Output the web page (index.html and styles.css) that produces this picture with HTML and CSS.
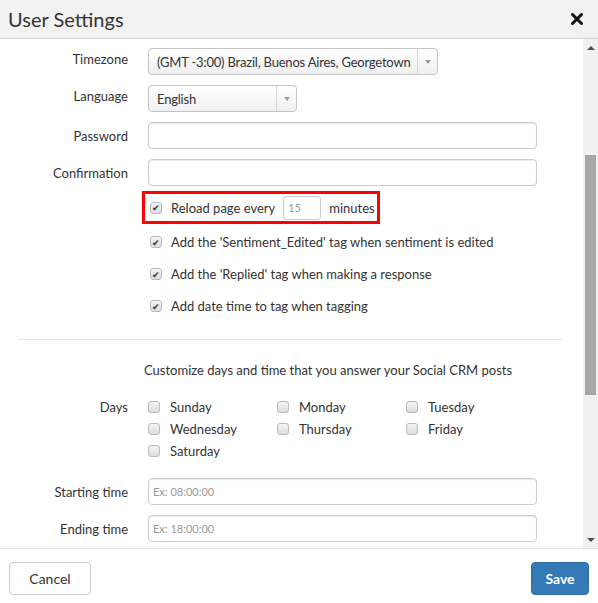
FILE: index.html
```html
<!DOCTYPE html>
<html lang="en">
<head>
<meta charset="UTF-8">
<title>User Settings</title>
<link rel="stylesheet" href="styles.css">
</head>
<body>
<div class="modal">
  <div class="modal-header">
    <h4 class="modal-title">User Settings</h4>
    <span class="close">
      <svg width="12" height="12" viewBox="0 0 12 12"><path d="M1.5 1.5 L10.5 10.5 M10.5 1.5 L1.5 10.5" stroke="#111" stroke-width="3" stroke-linecap="round"/></svg>
    </span>
  </div>

  <div class="modal-main">
    <div class="modal-body">
      <div class="form-row select-row">
        <label class="form-label">Timezone</label>
        <div class="select tz"><span class="select-text">(GMT -3:00) Brazil, Buenos Aires, Georgetown</span><span class="select-arrow"></span></div>
      </div>
      <div class="form-row select-row">
        <label class="form-label">Language</label>
        <div class="select lang"><span class="select-text">English</span><span class="select-arrow"></span></div>
      </div>
      <div class="form-row">
        <label class="form-label">Password</label>
        <div class="input"></div>
      </div>
      <div class="form-row">
        <label class="form-label">Confirmation</label>
        <div class="input"></div>
      </div>

      <div class="check-list">
        <div class="reload-box">
          <span class="checkbox checked"></span>
          <span>Reload page every</span>
          <span class="mini-input">15</span>
          <span>minutes</span>
        </div>
        <div class="check-row"><span class="checkbox checked"></span>Add the 'Sentiment_Edited' tag when sentiment is edited</div>
        <div class="check-row"><span class="checkbox checked"></span>Add the 'Replied' tag when making a response</div>
        <div class="check-row"><span class="checkbox checked"></span>Add date time to tag when tagging</div>
      </div>

      <hr class="divider">

      <p class="hint">Customize days and time that you answer your Social CRM posts</p>

      <div class="form-row days-row">
        <label class="form-label">Days</label>
        <div class="days">
          <div class="day"><span class="checkbox"></span>Sunday</div>
          <div class="day"><span class="checkbox"></span>Monday</div>
          <div class="day"><span class="checkbox"></span>Tuesday</div>
          <div class="day"><span class="checkbox"></span>Wednesday</div>
          <div class="day"><span class="checkbox"></span>Thursday</div>
          <div class="day"><span class="checkbox"></span>Friday</div>
          <div class="day"><span class="checkbox"></span>Saturday</div>
        </div>
      </div>

      <div class="form-row">
        <label class="form-label">Starting time</label>
        <div class="input"><span class="placeholder">Ex: 08:00:00</span></div>
      </div>
      <div class="form-row">
        <label class="form-label">Ending time</label>
        <div class="input"><span class="placeholder">Ex: 18:00:00</span></div>
      </div>
    </div>

    <div class="scrollbar">
      <span class="arrow up"></span>
      <div class="track"><div class="thumb"></div></div>
      <span class="arrow down"></span>
    </div>
  </div>

  <div class="modal-footer">
    <button class="btn">Cancel</button>
    <button class="btn btn-primary">Save</button>
  </div>
</div>
</body>
</html>
```

FILE: styles.css
```css
* { box-sizing: border-box; }
body { margin: 0; background: #fff; color: #333; font-family: Lato, "Open Sans", sans-serif; font-size: 13px; }
.modal { width: 598px; height: 603px; display: flex; flex-direction: column; }

.modal-header { height: 39px; background: #f2f2f2; border-bottom: 1px solid #d4d4d4; display: flex; align-items: center; justify-content: space-between; padding: 0 15px 0 8px; }
.modal-title { margin: 0; font-size: 20px; font-weight: normal; color: #333; }
.close { display: flex; }

.modal-main { height: 509px; display: flex; overflow: hidden; }
.modal-body { flex: 1; padding: 9px 20px 0 18px; overflow: hidden; }

.form-row { display: flex; align-items: center; margin-bottom: 10px; }
.form-label { width: 110px; text-align: right; margin-right: 20px; flex-shrink: 0; }
.select-row .form-label { padding-bottom: 6px; }

.input { width: 389px; height: 27px; border: 1px solid #ccc; border-radius: 4px; box-shadow: inset 0 1px 1px rgba(0,0,0,.08); display: flex; align-items: center; padding: 0 4px; }
.placeholder { font-size: 11px; color: #999; }

.select { height: 27px; border: 1px solid #c5c5c5; border-radius: 4px; background: linear-gradient(#fff, #f0f0f0); display: flex; align-items: center; }
.select.tz { width: 290px; }
.select.lang { width: 149px; }
.select-text { flex: 1; padding-left: 8px; white-space: nowrap; overflow: hidden; letter-spacing: -0.2px; }
.select-arrow { width: 20px; height: 100%; border-left: 1px solid #d4d4d4; display: flex; align-items: center; justify-content: center; }
.select-arrow::after { content: ""; border-left: 3px solid transparent; border-right: 3px solid transparent; border-top: 4px solid #999; }

.check-list { margin-left: 124px; margin-top: -5px; }
.reload-box { display: flex; width: fit-content; align-items: center; height: 33px; border: 3px solid #f00; padding: 0 2px 0 5px; margin-bottom: 2px; }
.reload-box .checkbox { margin-right: 9px; }
.mini-input { width: 38px; height: 24px; border: 1px solid #ccc; border-radius: 3px; margin: 0 8px; font-size: 11px; color: #999; display: flex; align-items: center; padding-left: 4px; }
.check-row { height: 32px; display: flex; align-items: center; padding-left: 8px; }
.check-row .checkbox { margin-right: 9px; }

.checkbox { width: 12px; height: 12px; border: 1px solid #bbb; border-radius: 3px; background: linear-gradient(#f4f4f4, #ddd); display: inline-flex; align-items: center; justify-content: center; flex-shrink: 0; }
.checkbox.checked::after { content: "\2714"; font-size: 9px; line-height: 1; color: #333; }

.divider { border: 0; border-top: 1px solid #e5e5e5; margin: 17px 0 0; }
.hint { margin: 22px 0 0 126px; }

.days-row { align-items: flex-start; margin-top: 18px; margin-bottom: 16px; }
.days-row .form-label { line-height: 22px; }
.days { display: grid; grid-template-columns: 129px 129px 129px; }
.day { height: 22px; display: flex; align-items: center; }
.day .checkbox { margin-right: 10px; }

.scrollbar { width: 15px; background: #f1f1f1; display: flex; flex-direction: column; align-items: center; }
.arrow { height: 17px; width: 15px; display: flex; align-items: center; justify-content: center; }
.arrow::after { content: ""; border-left: 4px solid transparent; border-right: 4px solid transparent; }
.arrow.up::after { border-bottom: 4px solid #505050; }
.arrow.down::after { border-top: 4px solid #505050; }
.track { flex: 1; width: 100%; padding-top: 99px; display: flex; justify-content: center; }
.thumb { width: 11px; height: 240px; background: #a8a8a8; }

.modal-footer { flex: 1; border-top: 1px solid #ddd; display: flex; justify-content: space-between; align-items: flex-start; padding: 13px 9px 0 9px; }
.btn { width: 82px; height: 33px; font-family: inherit; font-size: 14px; color: #333; background: #fff; border: 1px solid #ccc; border-radius: 4px; }
.btn-primary { width: 58px; background: #337ab7; border-color: #2e6da4; color: #fff; font-weight: bold; }
```
